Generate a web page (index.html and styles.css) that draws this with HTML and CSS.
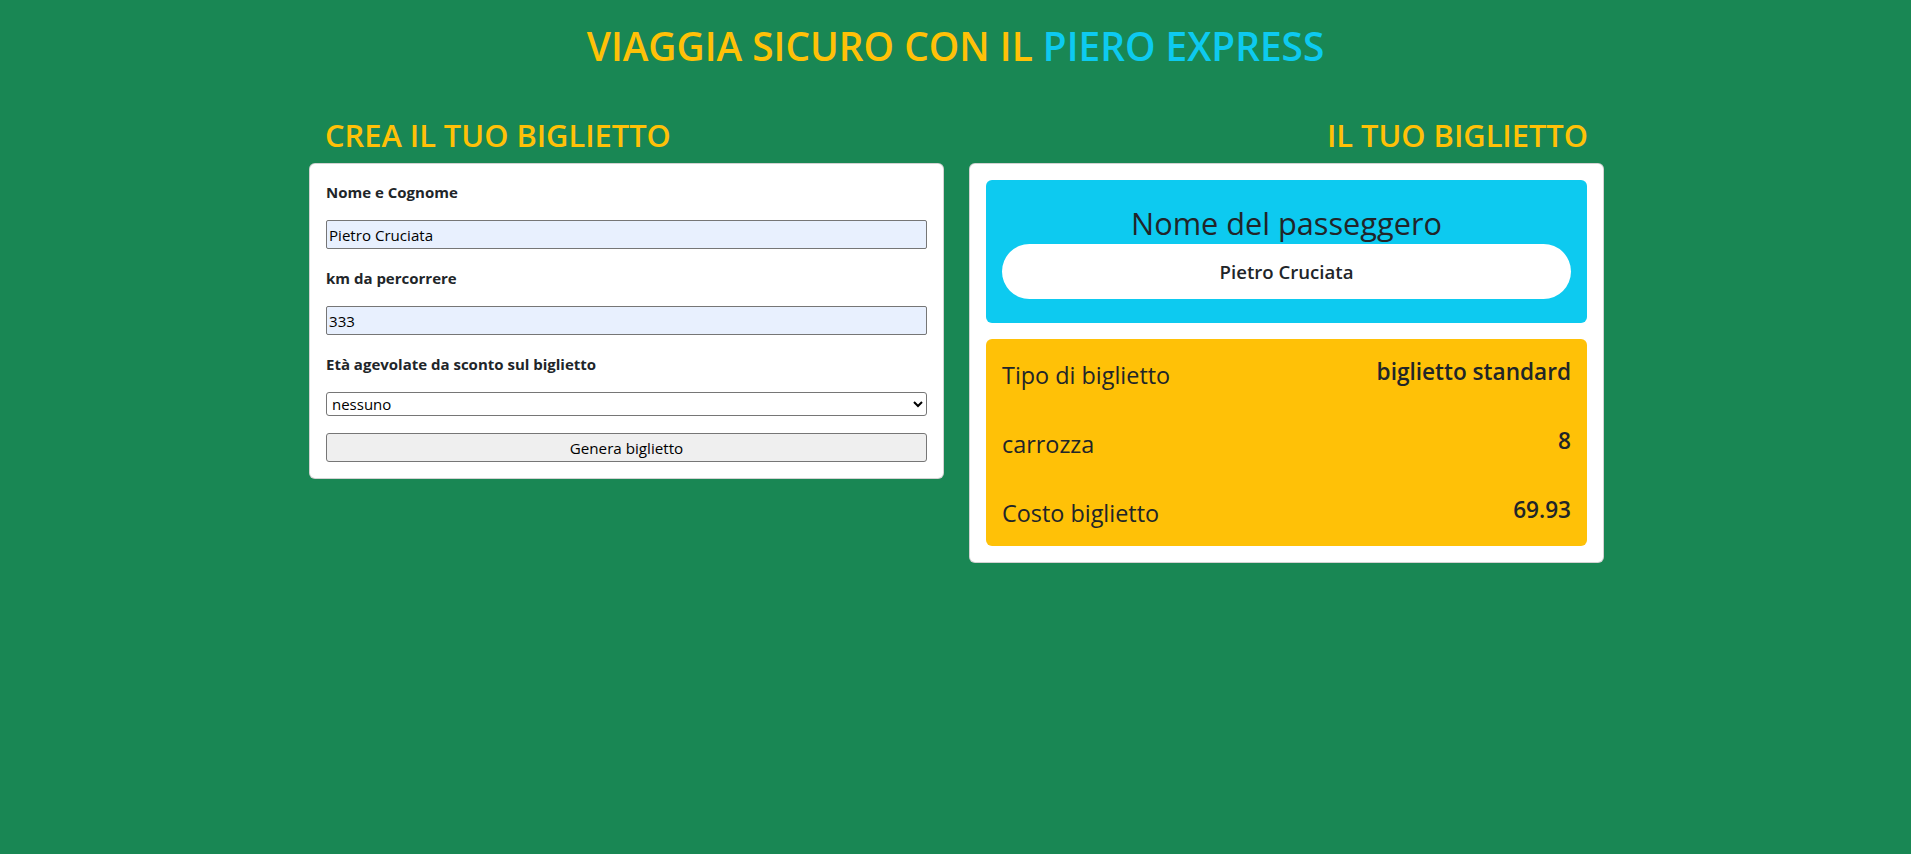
FILE: index.html
```html
<!DOCTYPE html>
<html lang="it">
<head>
<meta charset="utf-8">
<title>Piero Express</title>
<link rel="stylesheet" href="styles.css">
</head>
<body>
<header class="page-header">
  <h1 class="page-title">VIAGGIA SICURO CON IL <span class="accent">PIERO EXPRESS</span></h1>
</header>
<main class="board">
  <section class="column">
    <h2 class="column-title">CREA IL TUO BIGLIETTO</h2>
    <form class="card form-card">
      <label class="field-label" for="name">Nome e Cognome</label>
      <input class="text-input" id="name" type="text" value="Pietro Cruciata">
      <label class="field-label" for="km">km da percorrere</label>
      <input class="text-input" id="km" type="text" value="333">
      <label class="field-label" for="age">Età agevolate da sconto sul biglietto</label>
      <select class="select-input" id="age">
        <option>nessuno</option>
        <option>minorenne</option>
        <option>over 65</option>
      </select>
      <button class="submit-button" type="button">Genera biglietto</button>
    </form>
  </section>
  <section class="column">
    <h2 class="column-title right">IL TUO BIGLIETTO</h2>
    <div class="card ticket-card">
      <div class="passenger">
        <div class="passenger-title">Nome del passeggero</div>
        <div class="passenger-pill">Pietro Cruciata</div>
      </div>
      <div class="details">
        <div class="detail-row">
          <span class="detail-label">Tipo di biglietto</span>
          <span class="detail-value">biglietto standard</span>
        </div>
        <div class="detail-row">
          <span class="detail-label">carrozza</span>
          <span class="detail-value">8</span>
        </div>
        <div class="detail-row">
          <span class="detail-label">Costo biglietto</span>
          <span class="detail-value">69.93</span>
        </div>
      </div>
    </div>
  </section>
</main>
</body>
</html>
```

FILE: styles.css
```css
* {
  box-sizing: border-box;
}

html, body {
  margin: 0;
  min-height: 100%;
}

body {
  background: #198754;
  color: #212529;
  font-family: "Open Sans", "Noto Sans", sans-serif;
  font-size: 16px;
  line-height: 1.5;
  min-height: 854px;
}

.page-header {
  padding-top: 22px;
}

.page-title {
  margin: 0;
  text-align: center;
  font-size: 38.8px;
  line-height: 48px;
  font-weight: 600;
  color: #ffc107;
}

.accent {
  color: #0dcaf0;
}

.board {
  width: 1295px;
  margin: 46px 0 0 calc(50% - 646.5px);
  display: grid;
  grid-template-columns: 635px 635px;
  column-gap: 25px;
  align-items: start;
}

.column {
  display: flex;
  flex-direction: column;
}

.column-title {
  margin: 0 0 9px;
  padding: 1px 16px 0;
  font-size: 30.8px;
  line-height: 37px;
  font-weight: 600;
  color: #ffc107;
}

.column-title.right {
  text-align: right;
}

.card {
  background: #fff;
  border: 1px solid rgba(0, 0, 0, 0.175);
  border-radius: 6px;
  padding: 16px;
}

.form-card {
  display: flex;
  flex-direction: column;
}

.field-label {
  display: block;
  font-size: 15px;
  line-height: 21px;
  font-weight: 700;
  padding-top: 2px;
  margin-bottom: 17px;
}

.text-input {
  display: block;
  width: 100%;
  height: 29px;
  margin: 0 0 17px;
  padding: 0 2px;
  font-family: inherit;
  font-size: 15.1px;
  color: #000;
  background: #e8f0fe;
  border: 1px solid #767676;
  border-radius: 2px;
}

.select-input {
  display: block;
  width: 100%;
  height: 24px;
  margin: 0 0 17px;
  padding: 0 0 0 1px;
  font-family: inherit;
  font-size: 15px;
  color: #000;
  background: #fff;
  border: 1px solid #767676;
  border-radius: 3px;
}

.submit-button {
  display: block;
  width: 100%;
  height: 29px;
  padding: 0 6px;
  font-family: inherit;
  font-size: 15.2px;
  color: #000;
  background: #efefef;
  border: 1px solid #767676;
  border-radius: 3px;
}

.ticket-card {
  display: flex;
  flex-direction: column;
  gap: 16px;
}

.passenger {
  background: #0dcaf0;
  border-radius: 6px;
  padding: 24px 16px;
  text-align: center;
}

.passenger-title {
  font-size: 30.7px;
  line-height: 38px;
  font-weight: 400;
  margin-bottom: 2px;
}

.passenger-pill {
  height: 55px;
  display: flex;
  align-items: center;
  justify-content: center;
  background: #fff;
  border-radius: 999px;
  font-size: 18.6px;
  font-weight: 600;
}

.details {
  background: #ffc107;
  border-radius: 6px;
  padding: 18px 16px 14px;
  display: flex;
  flex-direction: column;
  gap: 32px;
}

.detail-row {
  height: 37px;
  display: flex;
  justify-content: space-between;
  align-items: flex-start;
}

.detail-label {
  font-size: 23.4px;
  line-height: 36px;
}

.detail-value {
  font-size: 22.6px;
  line-height: 29px;
  font-weight: 600;
}
```
